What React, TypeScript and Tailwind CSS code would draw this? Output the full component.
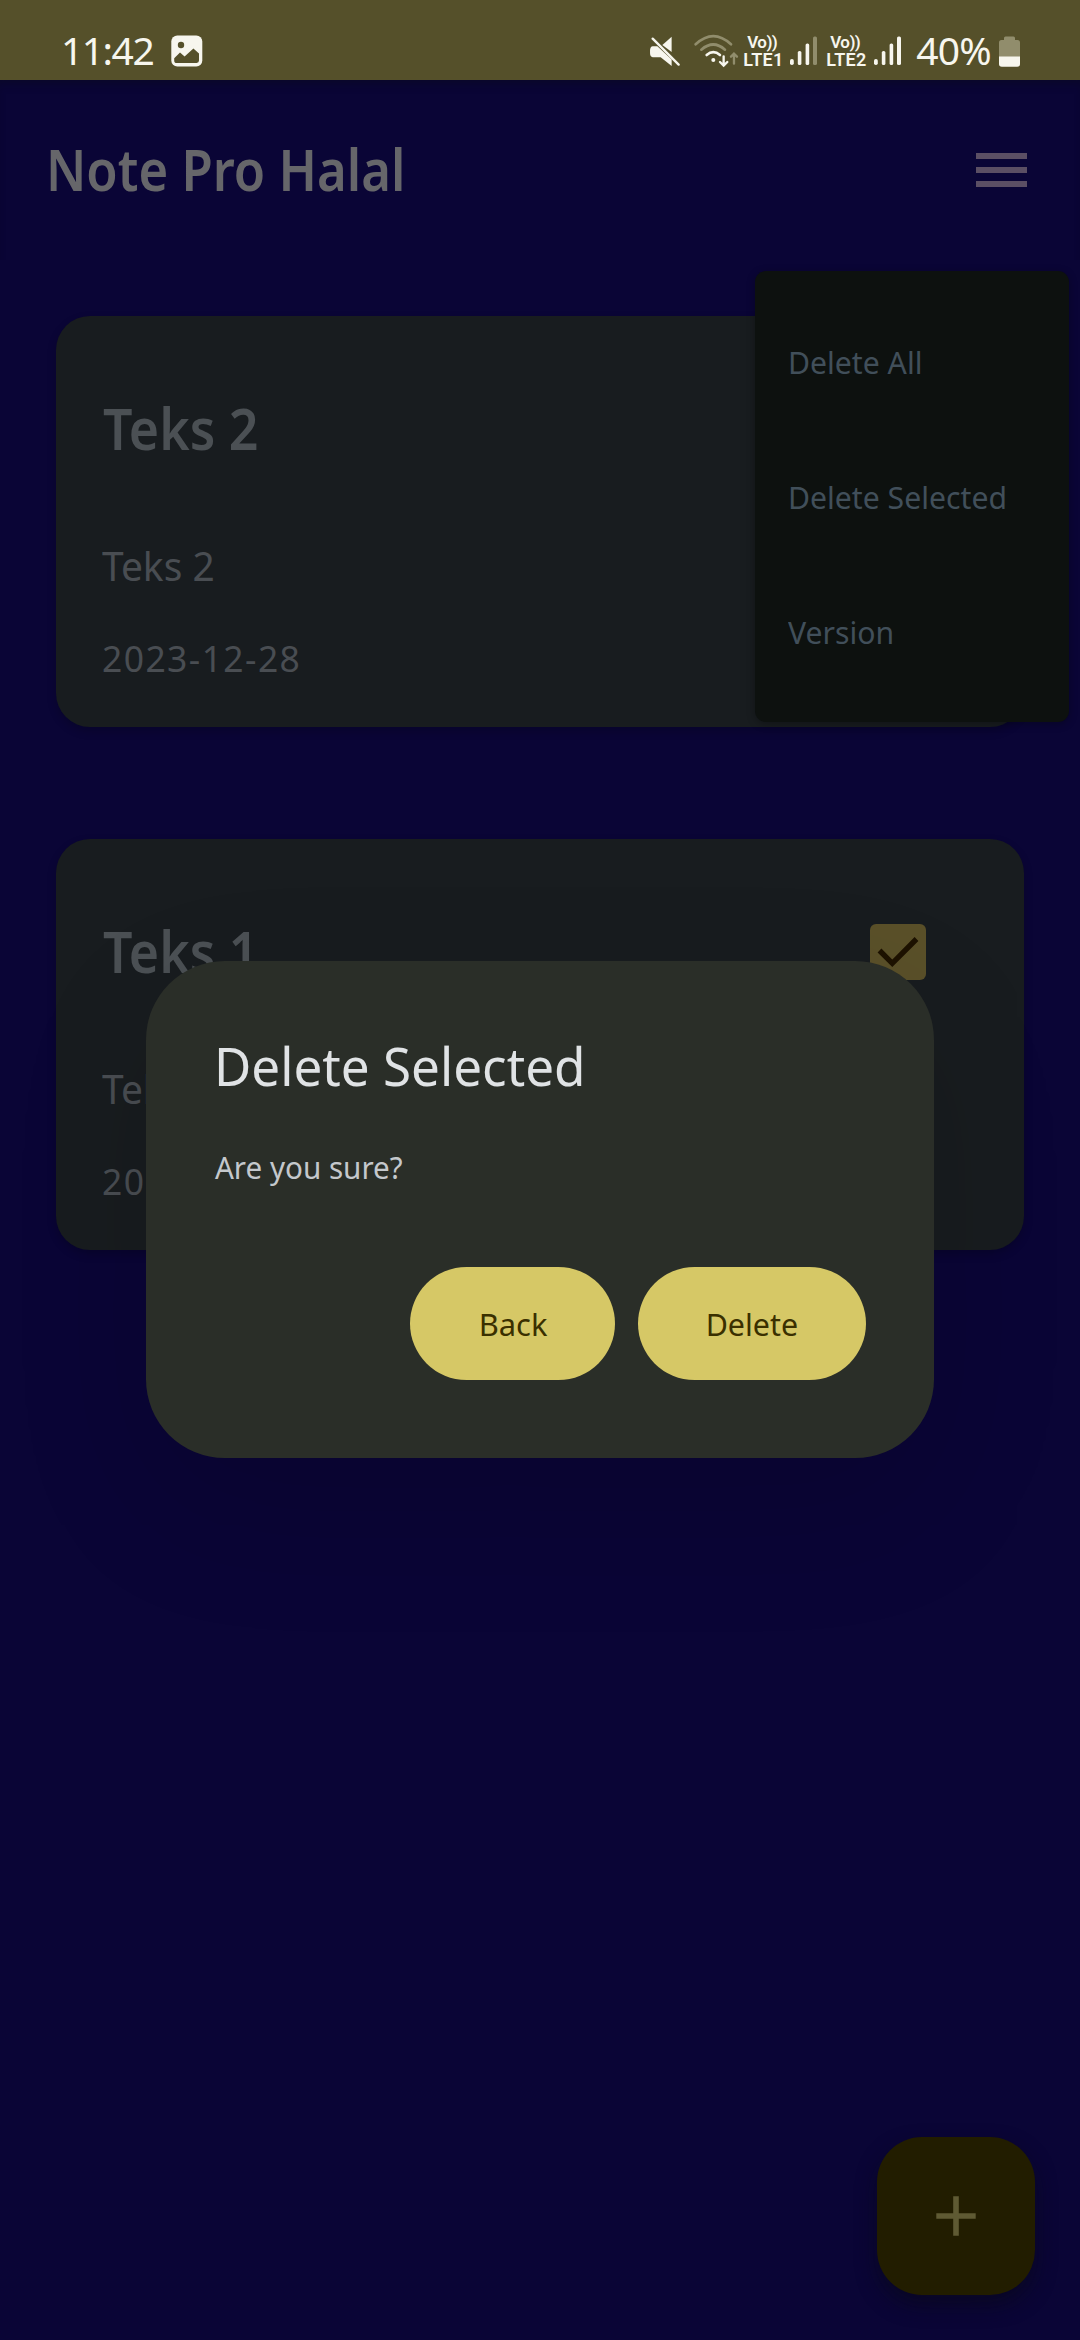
type Note = { title: string; body: string; date: string; checked: boolean };

const notes: Note[] = [
  { title: "Teks 2", body: "Teks 2", date: "2023-12-28", checked: false },
  { title: "Teks 1", body: "Teks 1", date: "2023-12-28", checked: true },
];

const menuItems = ["Delete All", "Delete Selected", "Version"];

function ImageIcon() {
  return (
    <svg viewBox="0 0 32 32" className="h-8 w-8 shrink-0">
      <rect x="0.3" y="0.5" width="31" height="31" rx="6" fill="#f7f6ee" />
      <circle cx="10" cy="10" r="3.2" fill="#55502a" />
      <path
        d="M3.2 23.2 L9 17.6 L13.6 21.6 L22.4 13.4 L28 18.6 V25.6 Q28 28 25.6 28 H5.8 Q3.2 28 3.2 25.4 Z"
        fill="#55502a"
      />
    </svg>
  );
}

function MuteIcon() {
  return (
    <svg viewBox="30 46 90 92" className="h-[30.6px] w-[30px] shrink-0">
      <path d="M95 48 V94 L67 73 Z" fill="#f7f6ee" />
      <path d="M38 77 H52 L95 117 V136 L62 110 H38 Q30 108 30 98 V88 Q31 78 38 77 Z" fill="#f7f6ee" />
      <path d="M38 54 L116 132" stroke="#f7f6ee" strokeWidth="7" strokeLinecap="round" />
    </svg>
  );
}

function WifiIcon() {
  return (
    <svg viewBox="160 40 136 102" className="h-[34px] w-[45.3px] shrink-0" fill="none" strokeLinecap="round">
      <path d="M165 71 Q218 22 271 71" stroke="#918d6c" strokeWidth="8" />
      <path d="M182 87 Q218 56 253 87" stroke="#918d6c" strokeWidth="8" />
      <path d="M198 103 Q218 86 238 103" stroke="#f7f6ee" strokeWidth="8" />
      <circle cx="218" cy="118" r="6" fill="#f7f6ee" />
      <path d="M249 107 V133 M238 124 L249 135 L260 124" stroke="#f7f6ee" strokeWidth="7" />
      <path d="M280 129 V101 M271 108 L280 99 L289 108" stroke="#918d6c" strokeWidth="7" />
    </svg>
  );
}

function Signal({ last }: { last: string }) {
  return (
    <svg viewBox="0 0 27 30" className="h-[30px] w-[27px] shrink-0">
      <rect x="0" y="23" width="3.8" height="6" rx="1.8" fill="#f7f6ee" />
      <rect x="7.8" y="15" width="3.6" height="14" rx="1.6" fill="#f7f6ee" />
      <rect x="15.6" y="7.4" width="3.6" height="21.6" rx="1.6" fill="#f7f6ee" />
      <rect x="23" y="0.6" width="4" height="28.4" rx="1.6" fill={last} />
    </svg>
  );
}

function VoLte({ line }: { line: string }) {
  return (
    <div className="flex w-[47px] shrink-0 flex-col font-['Roboto',sans-serif] font-semibold leading-[17px]">
      <span className="pl-1 text-[17px] tracking-[-0.6px]">Vo))</span>
      <span className="text-[18px] tracking-[0.3px]">{line}</span>
    </div>
  );
}

function BatteryIcon() {
  return (
    <svg viewBox="0 0 21 31" className="h-[31px] w-[21px] shrink-0">
      <path
        d="M6.5 0.5 H14.5 Q16 0.5 16 2 V4 H18.5 Q21 4 21 6.5 V22 H0 V6.5 Q0 4 2.5 4 H5 V2 Q5 0.5 6.5 0.5 Z"
        fill="#918d6c"
      />
      <path d="M0 20.5 H21 V28 Q21 30.8 18.2 30.8 H2.8 Q0 30.8 0 28 Z" fill="#f7f6ee" />
    </svg>
  );
}

function StatusBar() {
  return (
    <div className="flex h-20 items-center bg-[#55502a] pl-[61px] pt-[22px] text-[#f7f6ee]">
      <div className="-mt-1 w-[110px] text-[39px] leading-none tracking-[-1.5px]">11:42</div>
      <ImageIcon />
      <div className="ml-[447px] flex items-center">
        <MuteIcon />
        <div className="ml-[13.5px] flex">
          <WifiIcon />
        </div>
        <div className="ml-[4.5px] flex">
          <VoLte line="LTE1" />
        </div>
        <Signal last="#918d6c" />
        <div className="ml-[9px] flex">
          <VoLte line="LTE2" />
        </div>
        <div className="ml-px flex">
          <Signal last="#f7f6ee" />
        </div>
        <div className="-mt-1 ml-[15px] w-[83px] text-[39px] leading-none tracking-[-0.8px]">40%</div>
        <BatteryIcon />
      </div>
    </div>
  );
}

function NoteCard({ note }: { note: Note }) {
  return (
    <div className="h-[411px] rounded-[34px] bg-[#181c1f] pl-[46px] pr-[98px] pt-[57px] shadow-[0_4px_10px_rgba(0,0,0,0.2)]">
      <div className="flex h-28 items-center justify-between">
        <div className="-mt-0.5 origin-left scale-x-[0.91] pl-px text-[57px] font-semibold leading-none text-[#4b5054]">
          {note.title}
        </div>
        {note.checked && (
          <div className="flex h-14 w-14 items-center justify-center rounded-md bg-[#5a5029]">
            <svg viewBox="0 0 56 56" className="h-14 w-14" fill="none">
              <path d="M9.5 26.5 L22.3 39.3 L46.5 15" stroke="#1d1200" strokeWidth="5.4" />
            </svg>
          </div>
        )}
      </div>
      <div className="mt-[53px] origin-left scale-x-[0.985] text-[39.5px] leading-[56px] text-[#494d52]">{note.body}</div>
      <div className="mt-10 text-[35.5px] leading-[48px] tracking-[1.4px] text-[#494d52]">{note.date}</div>
    </div>
  );
}

function Menu() {
  return (
    <div className="absolute left-[755px] top-[271px] flex h-[451px] w-[314px] flex-col rounded-[11px] bg-[#0d110f] pl-[33px] pt-[23px] shadow-[0_2px_8px_rgba(0,0,0,0.3)]">
      {menuItems.map((item) => (
        <div
          key={item}
          className="flex h-[135px] origin-left scale-x-[0.958] items-center whitespace-nowrap text-[31.5px] leading-none text-[#414f5a]"
        >
          {item}
        </div>
      ))}
    </div>
  );
}

function Dialog() {
  return (
    <div className="absolute left-[146.25px] top-[961px] h-[497px] w-[787.5px] rounded-[78.75px] bg-[#2a2e28] px-[67.5px] pt-[69px] shadow-[0_50px_140px_rgba(0,0,0,0.12)]">
      <h2 className="origin-left scale-x-[0.966] text-[53px] leading-[72px] text-[#e0e3e5]">Delete Selected</h2>
      <p className="mt-[43px] origin-left scale-x-[0.94] pl-px text-[31.5px] leading-[44px] text-[#c4c8cc]">
        Are you sure?
      </p>
      <div className="mt-[78px] flex justify-end gap-[23px] text-[31.5px] leading-none text-[#3a3000]">
        <button className="h-[113px] w-[205px] rounded-full bg-[#d6c866]">
          <span className="inline-block scale-x-[0.98]">Back</span>
        </button>
        <button className="h-[113px] w-[228px] rounded-full bg-[#d6c866]">
          <span className="inline-block scale-x-[0.965]">Delete</span>
        </button>
      </div>
    </div>
  );
}

export default function App() {
  return (
    <div className="relative h-[2340px] w-[1080px] overflow-hidden bg-[#0a0536] font-['Noto_Sans',sans-serif]">
      <StatusBar />
      <header className="flex h-[180px] items-center justify-between pl-[45.5px] pr-[53px] shadow-[inset_0_8px_8px_-4px_rgba(10,10,30,0.5)]">
        <h1 className="-mt-0.5 origin-left scale-x-[0.893] whitespace-nowrap text-[57px] font-semibold leading-none text-[#66666a]">
          Note Pro Halal
        </h1>
        <div className="flex w-[51px] flex-col gap-2">
          <div className="h-1.5 bg-[#5b4f64]" />
          <div className="h-1.5 bg-[#5b4f64]" />
          <div className="h-1.5 bg-[#5b4f64]" />
        </div>
      </header>
      <main className="flex flex-col gap-28 px-14 pt-14">
        {notes.map((note) => (
          <NoteCard key={note.title} note={note} />
        ))}
      </main>
      <button className="absolute left-[877px] top-[2137px] flex h-[157.5px] w-[157.5px] items-center justify-center rounded-[45px] bg-[#221d00] shadow-[0_10px_20px_rgba(8,8,24,0.6)]">
        <svg viewBox="0 0 40 40" className="h-10 w-10">
          <path d="M20 0.3 V39.7 M0.3 20 H39.7" stroke="#5f5a33" strokeWidth="5.6" />
        </svg>
      </button>
      <Menu />
      <Dialog />
    </div>
  );
}
